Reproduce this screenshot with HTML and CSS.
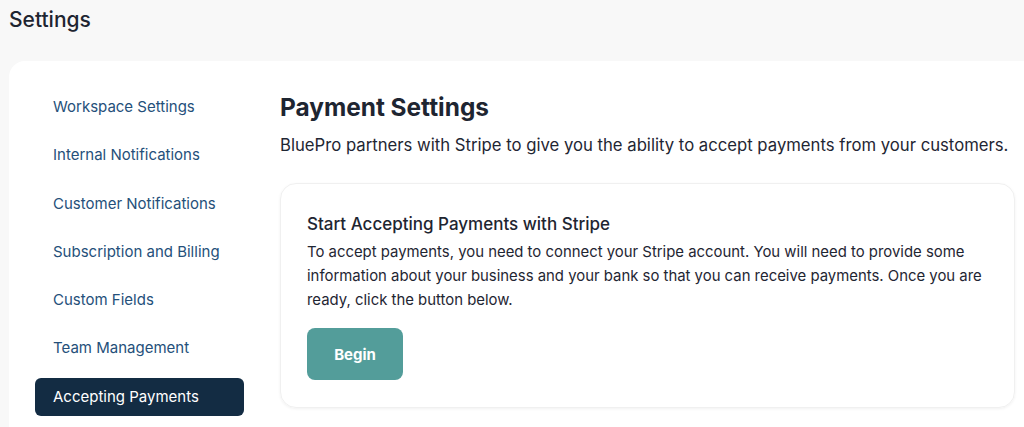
FILE: index.html
```html
<!DOCTYPE html>
<html>
<head>
  <title>Settings</title>
  <meta charset="UTF-8">
  <meta name="viewport" content="width=device-width, initial-scale=1.0">
  <link rel="stylesheet" href="styles.css">
</head>
<body>
  <h1 class="page-title">Settings</h1>

  <div class="panel">
    <ul class="side-nav">
      <li><a href="#">Workspace Settings</a></li>
      <li><a href="#">Internal Notifications</a></li>
      <li><a href="#">Customer Notifications</a></li>
      <li><a href="#">Subscription and Billing</a></li>
      <li><a href="#">Custom Fields</a></li>
      <li><a href="#">Team Management</a></li>
      <li><a href="#" class="active">Accepting Payments</a></li>
    </ul>

    <div class="content">
      <h2>Payment Settings</h2>
      <p class="lead">BluePro partners with Stripe to give you the ability to accept payments from your customers.</p>

      <div class="card">
        <h3>Start Accepting Payments with Stripe</h3>
        <p>To accept payments, you need to connect your Stripe account. You will need to provide some information about your business and your bank so that you can receive payments. Once you are ready, click the button below.</p>
        <button type="button">Begin</button>
      </div>
    </div>
  </div>
</body>
</html>
```

FILE: styles.css
```css
/* Reset styles */
* {
  margin: 0;
  padding: 0;
  box-sizing: border-box;
}

/* Base styles */
body {
  font-family: 'Inter', 'Noto Sans', sans-serif;
  background-color: #f8f8f8;
  color: #1f2633;
  overflow: hidden;
}

.page-title {
  font-size: 21px;
  font-weight: 500;
  line-height: 24px;
  padding: 8px 9px 29px;
  color: #1e2531;
}

/* Layout styles */
.panel {
  display: flex;
  gap: 36px;
  margin-left: 9px;
  margin-right: -40px;
  padding: 27px 0 20px 26px;
  background-color: #fff;
  border-radius: 16px 0 0 0;
}

.side-nav {
  list-style: none;
  width: 209px;
  flex-shrink: 0;
  display: flex;
  flex-direction: column;
  gap: 10.3px;
}

.side-nav a {
  display: block;
  height: 38px;
  line-height: 38px;
  padding-left: 18px;
  font-size: 15px;
  color: #25507a;
  text-decoration: none;
  border-radius: 6px;
}

.side-nav a.active {
  background-color: #132c43;
  color: #fff;
}

.content {
  width: 735px;
  flex-shrink: 0;
}

.content h2 {
  font-size: 24.4px;
  font-weight: 700;
  line-height: 32px;
  margin-top: 3px;
  color: #1e2531;
}

.content .lead {
  font-size: 16.7px;
  line-height: 24px;
  margin-top: 10px;
  color: #1f2633;
}

.card {
  margin-top: 26px;
  padding: 28px 26px 27px;
  border: 1px solid #f0f0f0;
  border-radius: 16px;
  box-shadow: 0 1px 3px rgba(0, 0, 0, 0.06);
}

.card h3 {
  font-size: 17px;
  font-weight: 500;
  line-height: 24px;
  color: #1e2531;
}

.card p {
  font-size: 14.9px;
  line-height: 24px;
  margin-top: 4px;
  color: #1f2633;
}

.card button {
  margin-top: 16px;
  width: 96px;
  height: 52px;
  background-color: #539d9a;
  color: #fff;
  border: none;
  border-radius: 8px;
  font-family: inherit;
  font-size: 15px;
  font-weight: 700;
  cursor: pointer;
}
```
